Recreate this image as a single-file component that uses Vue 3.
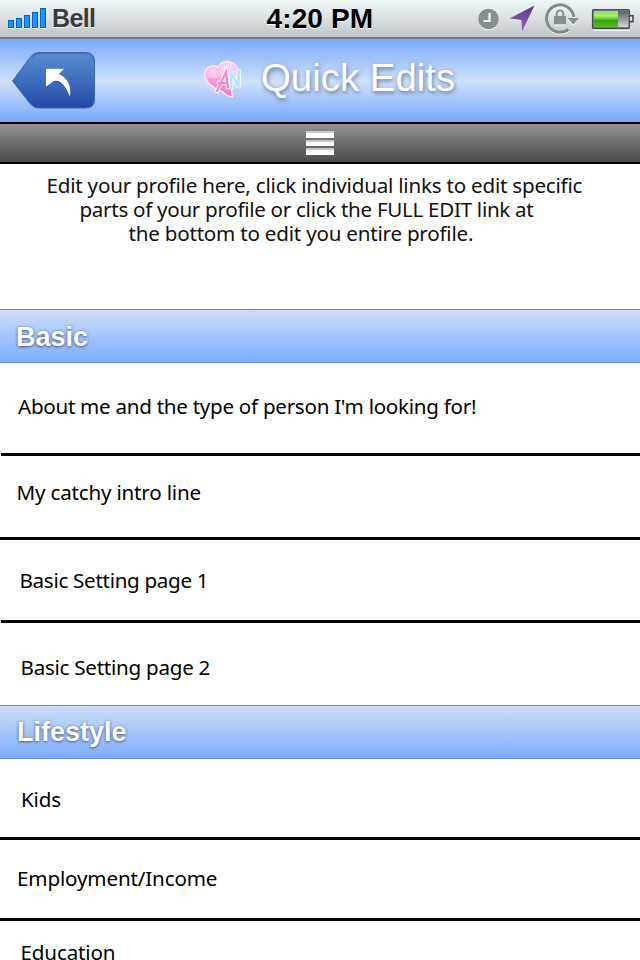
<script setup>
const intro = [
  { text: 'Edit your profile here, click individual links to edit specific', id: 'intro-1' },
  { text: 'parts of your profile or click the FULL EDIT link at', id: 'intro-2' },
  { text: 'the bottom to edit you entire profile.', id: 'intro-3' },
]
const sections = [
  {
    title: 'Basic',
    id: 'basic',
    rows: [
      { text: "About me and the type of person I'm looking for!", id: 'about' },
      { text: 'My catchy intro line', id: 'catchy' },
      { text: 'Basic Setting page 1', id: 'setting-1' },
      { text: 'Basic Setting page 2', id: 'setting-2' },
    ],
  },
  {
    title: 'Lifestyle',
    id: 'lifestyle',
    rows: [
      { text: 'Kids', id: 'kids' },
      { text: 'Employment/Income', id: 'employment' },
      { text: 'Education', id: 'education' },
    ],
  },
]
</script>

<template>
  <main class="screen">
    <header class="status">
      <div class="carrier">
        <svg class="signal" width="40" height="22" viewBox="0 0 40 22">
          <defs>
            <linearGradient id="sig" x1="0" x2="1" y1="0" y2="0">
              <stop offset="0" stop-color="#19a0ff" />
              <stop offset="1" stop-color="#168cf2" />
            </linearGradient>
          </defs>
          <g fill="url(#sig)" stroke="#0b5fc4" stroke-width="1">
            <rect x=".5" y="13.5" width="5" height="7" />
            <rect x="8.500" y="11.500" width="5" height="9" />
            <rect x="16.500" y="8.500" width="5" height="12" />
            <rect x="24.500" y="5.500" width="5" height="15" />
            <rect x="32.500" y="1.500" width="5" height="19" />
          </g>
        </svg>
        <span class="bell">Bell</span>
      </div>
      <span class="clock">4:20 PM</span>
      <svg class="tray" width="162" height="37" viewBox="478 0 162 37">
        <defs>
          <linearGradient id="loc" x1="0" x2="0" y1="0" y2="1">
            <stop offset="0" stop-color="#4f3b8c" />
            <stop offset="1" stop-color="#a85bbd" />
          </linearGradient>
          <linearGradient id="charge" x1="0" x2="0" y1="0" y2="1">
            <stop offset="0" stop-color="#8fe45c" />
            <stop offset=".3" stop-color="#a2ee70" />
            <stop offset=".48" stop-color="#6ccb35" />
            <stop offset=".6" stop-color="#37a408" />
            <stop offset="1" stop-color="#5abb26" />
          </linearGradient>
          <linearGradient id="empty" x1="0" x2="0" y1="0" y2="1">
            <stop offset="0" stop-color="#5b5d5e" />
            <stop offset="1" stop-color="#d2d2d2" />
          </linearGradient>
        </defs>
        <circle cx="488.500" cy="20" r="10.300" fill="#f4f7f8" />
        <circle cx="488.500" cy="19" r="10.300" fill="#84908f" />
        <path d="M489.500 13v8h-6" fill="none" stroke="#f4f7f8" stroke-width="2.200" />
        <path d="M534 7 521.500 32.500 522 21 510 19.500Z" fill="#f3f6f7" />
        <path d="M534.500 5.500 522 31.500 521.500 20 509.500 18.500Z" fill="url(#loc)" />
        <path d="M573.800 17A13.700 13.700 0 1 0 568.500 29.500" fill="none" stroke="#f4f7f8" stroke-width="3" transform="translate(0 1)" />
        <path d="M573.800 17A13.700 13.700 0 1 0 568.500 29.500" fill="none" stroke="#7f8d8b" stroke-width="3" />
        <path d="M567.500 19h11.500l-5.700 7Z" fill="#f4f7f8" />
        <path d="M567.500 18h11.500l-5.700 6.500Z" fill="#7f8d8b" />
        <path d="M554 25h12" stroke="#f4f7f8" stroke-width="1.500" />
        <path d="M556.700 17v-3.200a3.300 3.300 0 0 1 6.600 0V17" fill="none" stroke="#84908f" stroke-width="2" />
        <rect x="554" y="16" width="12" height="8.300" fill="#84908f" />
        <path d="M593 30.500h37" stroke="#f4f7f8" stroke-width="1" />
        <rect x="592.800" y="9.800" width="36.400" height="18.400" rx="1" fill="#e8ecea" stroke="#464b5d" stroke-width="1.800" />
        <path d="M630 15.800h3v5.800h-3" fill="#e2e6e8" stroke="#464b5d" stroke-width="1.600" />
        <rect x="618" y="11" width="10.300" height="16" fill="url(#empty)" />
        <rect x="594" y="11" width="24" height="16" fill="url(#charge)" />
      </svg>
    </header>

    <nav class="nav">
      <svg class="back" width="86" height="60" viewBox="10 50 86 60">
        <defs>
          <linearGradient id="btn" x1="0" x2="0" y1="0" y2="1">
            <stop offset="0" stop-color="#5b8bcf" />
            <stop offset=".5" stop-color="#3d6fbd" />
            <stop offset="1" stop-color="#2149a5" />
          </linearGradient>
        </defs>
        <path d="M12.500 81 30 57.500Q34 52.500 38 52.500H85.500Q94.500 52.500 94.500 61V99.500Q94.500 108 85.500 108H38Q34 108 30 103.500Z" fill="url(#btn)" stroke="#3a67b8" />
        <path d="M32 57Q35 53.500 39 53.500H86Q92 54 93.500 60" fill="none" stroke="#2f58a8" stroke-opacity=".6" />
        <path d="M46 68.500H64L59 74Q73 80 70.500 98Q62 80 53.500 82L46 88Z" fill="#1e3f8a" opacity=".6" />
        <path d="M46 68.800H64L59 74Q72.500 80.500 70 97Q63 79 54 81L46 86.800Z" fill="#fff" />
      </svg>
      <div class="brand">
        <svg class="logo" width="42" height="42" viewBox="202 58 42 42">
          <defs>
            <linearGradient id="heart" x1="0" x2="0" y1="0" y2="1">
              <stop offset="0" stop-color="#fbd3ee" />
              <stop offset=".5" stop-color="#ff9fda" />
              <stop offset="1" stop-color="#ff6fc6" />
            </linearGradient>
          </defs>
          <path d="M218 67.500Q221 61 228 61.500Q236 62.500 238.500 71Q239 79 231 87.500L232.500 97Q226 96 223 92Q208 87 205 77Q204 66 214 66Q217 66 218 67.500Z" fill="url(#heart)" stroke="#fdeafa" stroke-width="1.300" />
          <path d="M207 76Q207 69 214 69L219 71Q224 62.500 230 64Q236 67 236 73Q227 72 222 76Q214 80 207 76Z" fill="#fff" opacity=".3" />
          <g fill="none" stroke-linecap="square">
            <path d="M217 91 226 72 228 87M219 83H227" stroke="#fff" stroke-width="4.300" />
            <path d="M231 87V72L238.500 87V71.500" stroke="#f5fcff" stroke-width="4.600" />
            <path d="M217 91 226 72 228 87M219 83H227" stroke="#ff82cb" stroke-width="2.200" />
            <path d="M231 87V72L238.500 87V71.500" stroke="#b7e5f8" stroke-width="2.800" />
          </g>
        </svg>
        <h1 class="heading">Quick Edits</h1>
      </div>
    </nav>

    <div class="toolbar">
      <div class="menu"><i class="bar"></i><i class="bar mid"></i><i class="bar"></i></div>
    </div>

    <div class="intro">
      <div v-for="l in intro" :key="l.id" class="line" :class="l.id">{{ l.text }}</div>
    </div>

    <section v-for="s in sections" :key="s.id">
      <h2 class="section-title" :class="s.id">{{ s.title }}</h2>
      <div v-for="r in s.rows" :key="r.id" class="row" :class="r.id">
        <span class="label">{{ r.text }}</span>
      </div>
    </section>
  </main>
</template>

<style>
body { background: #fff; }
</style>

<style scoped>
* { box-sizing: border-box; }
.screen {
  width: 640px; height: 960px; overflow: hidden; background: #fff; color: #000;
  font-family: "Noto Sans", "Open Sans", sans-serif; font-size: 20.6px; line-height: 24px;
}
.status {
  height: 39px; display: grid; grid-template-columns: 266px 1fr 162px;
  border-bottom: 2px solid #75797e;
  background: linear-gradient(#eff7f9, #dde3e5 45%, #bfc5c6);
  font-family: "Liberation Sans", Arial, sans-serif; font-weight: bold;
  text-shadow: 0 1px 1px #fff;
}
.carrier { display: flex; padding: 7px 0 0 8px; }
.signal { display: block; filter: drop-shadow(0 1px 0 #fff); }
.bell { margin-left: 4px; font-size: 25px; line-height: 22px; letter-spacing: -.6px; color: #393b3d; }
.clock { font-size: 28px; line-height: 38px; letter-spacing: .1px; padding-left: .6px; }
.tray { display: block; }
.nav {
  height: 83px; display: flex; padding-left: 10px;
  background: linear-gradient(#78aaff, #cddff9 50%, #c9dcf9 55%, #76a8ff);
}
.back { display: block; margin-top: 11px; }
.brand { display: flex; margin-left: 106px; }
.logo { display: block; margin-top: 19px; }
.heading {
  margin: 17px 0 0 17px; font: 38.4px/44px "Liberation Sans", Arial, sans-serif; color: #fff;
  text-shadow: 1px 2px 4px rgba(60, 85, 130, .75);
}
.toolbar {
  height: 42px; border-top: 2px solid #000; border-bottom: 2px solid #000;
  background: linear-gradient(#919395, #6c6e70 50%, #494b4d);
  display: flex; justify-content: center; padding-top: 7px;
}
.menu { display: flex; flex-direction: column; gap: 2px; width: 28px; }
.bar { height: 7px; background: #fcfcfc; border-top: 2px solid #cbc9ca; }
.mid { height: 6px; }
.intro { height: 145px; padding-top: 9px; color: #111; letter-spacing: -.22px; }
.line { white-space: nowrap; }
.intro-1 { padding-left: 46.5px; }
.intro-2 { padding-left: 79.5px; letter-spacing: -.3px; }
.intro-3 { padding-left: 128.5px; }
.section-title {
  height: 54px; margin: 0; padding-left: 16px;
  border-top: 1px solid #658cca; border-bottom: 1px solid #658cca;
  background: linear-gradient(#cddef8, #7cadff);
  font: bold 27px/54px "Liberation Sans", Arial, sans-serif; color: #fff;
  text-shadow: 0 1px 3px rgba(65, 80, 115, .85), 0 0 2px rgba(65, 80, 115, .5);
}
.lifestyle { padding-left: 17px; line-height: 52px; }
.row { border-bottom: 3px solid #000; white-space: nowrap; letter-spacing: -.2px; }
.label { display: block; }
.about { height: 93px; padding: 31px 0 0 17px; margin-left: 1px; letter-spacing: -.28px; }
.catchy { height: 84px; padding: 24px 0 0 16.6px; }
.setting-1 { height: 83px; padding: 28px 0 0 18.5px; margin-left: 1px; letter-spacing: -.3px; }
.setting-2 { height: 82px; padding: 32px 0 0 20.5px; border-bottom: 0; letter-spacing: -.26px; }
.kids { height: 81px; padding: 28px 0 0 21px; }
.employment { height: 81px; padding: 26px 0 0 17px; letter-spacing: -.15px; }
.education { height: 39px; padding: 19px 0 0 20.5px; border-bottom: 0; letter-spacing: -.15px; }
</style>
